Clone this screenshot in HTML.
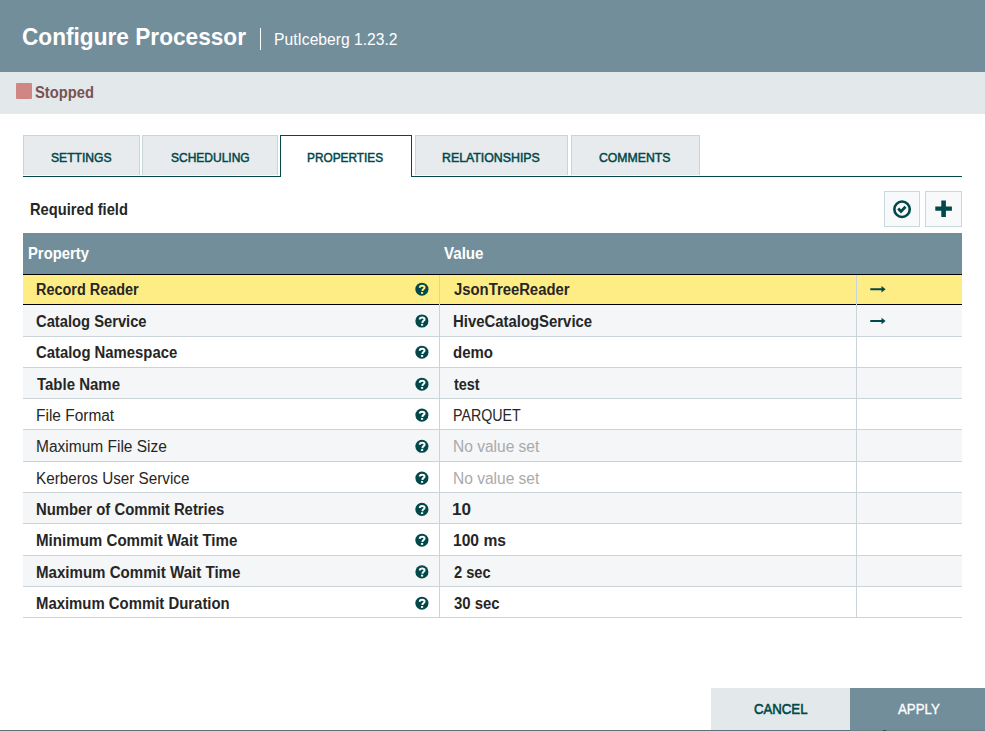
<!DOCTYPE html>
<html><head><meta charset="utf-8">
<style>
*{box-sizing:border-box;margin:0;padding:0}
html,body{width:985px;height:731px;overflow:hidden;background:#fff;font-family:"Liberation Sans",sans-serif;color:#262626}
.t{position:absolute;white-space:nowrap;transform-origin:0 0}
#hdr{position:absolute;left:0;top:0;width:985px;height:72px;background:#728e9b}
#sep{position:absolute;left:260px;top:28px;width:1px;height:22px;background:#fff}
#status{position:absolute;left:0;top:72px;width:985px;height:42px;background:#e3e8eb}
#sq{position:absolute;left:16px;top:83.4px;width:16px;height:15.4px;background:#d18686;border-radius:1px}
.tab{position:absolute;top:135px;height:40px;background:#e7ebee;border:1px solid #c6d7d9;border-bottom:none}
.tab.act{background:#fff;border-color:#004849;height:42px}
#tabline{position:absolute;left:23px;top:176px;width:939px;height:1px;background:#004849}
.btn{position:absolute;top:191px;width:36px;height:36px;border:1px solid #c9d8da;background:#f8f9fa}
#th{position:absolute;left:23px;top:233px;width:939px;height:41px;background:#728e9b}
#thl{position:absolute;left:23px;top:274px;width:939px;height:1px;background:#000}
.row{position:absolute;left:23px;width:939px}
.hl{position:absolute;left:23px;width:939px;height:1px}
.vl{position:absolute;width:1px;background:#cbd4d9}
.ic{position:absolute;display:block}
#cancel{position:absolute;left:711px;top:688px;width:139px;height:43px;background:#e3e8eb}
#apply{position:absolute;left:850px;top:688px;width:135px;height:43px;background:#728e9b}
#botline{position:absolute;left:0;top:730px;width:985px;height:1px;background:#626f77}
</style></head><body>
<div id="hdr"></div>
<div id="sep"></div>
<div id="status"></div>
<div id="sq"></div>
<div class="tab" style="left:23px;width:117px"></div>
<div class="tab" style="left:142px;width:136px"></div>
<div id="tabline"></div>
<div class="tab act" style="left:280px;width:132px"></div>
<div class="tab" style="left:415px;width:153px"></div>
<div class="tab" style="left:571px;width:129px"></div>
<div class="btn" style="left:884px"></div>
<div class="btn" style="left:925px;width:37px"></div>
<svg class="ic" style="left:884px;top:191px" width="80" height="36" viewBox="884 191 80 36">
<circle cx="902.05" cy="209.25" r="7.7" fill="none" stroke="#004849" stroke-width="2.6"/>
<path d="M898.2 208.5 L901.0 211.4 L905.5 206.8" fill="none" stroke="#004849" stroke-width="2.8"/>
<path d="M941.3 200.5 H945.9 V206.4 H951.9 V210.8 H945.9 V216.9 H941.3 V210.8 H935.3 V206.4 H941.3 Z" fill="#004849"/>
</svg>
<div id="th"></div>
<div id="thl"></div>
<div class="row" style="top:275px;height:29px;background:#feec84"></div>
<div class="hl" style="top:304px;background:#000"></div>
<svg class="ic" style="left:412px;top:279px;transform:translateY(0.00px)" width="20" height="20" viewBox="412 279 20 20"><circle cx="421.9" cy="289.2" r="6.55" fill="#004849"/><path d="M419.75 287.7 C419.75 286.3 420.8 285.75 422.1 285.75 C423.5 285.75 424.55 286.5 424.55 287.6 C424.55 288.9 422.55 289.1 422.55 290.3 V291.1" fill="none" stroke="#feec84" stroke-width="2.0"/><rect x="420.95" y="292.05" width="2.2" height="1.8" fill="#feec84"/></svg>
<svg class="ic" style="left:866px;top:280px;transform:translateY(0.10px)" width="24" height="18" viewBox="866 280 24 18"><path d="M870.3 288.1 H881.5 V285.8 L885.6 289.1 L881.5 292.4 V290.1 H870.3 Z" fill="#004849"/></svg>
<div class="row" style="top:305px;height:31px;background:#f4f6f7"></div>
<div class="hl" style="top:336px;background:#cbd4d9"></div>
<svg class="ic" style="left:412px;top:279px;transform:translateY(31.80px)" width="20" height="20" viewBox="412 279 20 20"><circle cx="421.9" cy="289.2" r="6.55" fill="#004849"/><path d="M419.75 287.7 C419.75 286.3 420.8 285.75 422.1 285.75 C423.5 285.75 424.55 286.5 424.55 287.6 C424.55 288.9 422.55 289.1 422.55 290.3 V291.1" fill="none" stroke="#f4f6f7" stroke-width="2.0"/><rect x="420.95" y="292.05" width="2.2" height="1.8" fill="#f4f6f7"/></svg>
<svg class="ic" style="left:866px;top:280px;transform:translateY(31.90px)" width="24" height="18" viewBox="866 280 24 18"><path d="M870.3 288.1 H881.5 V285.8 L885.6 289.1 L881.5 292.4 V290.1 H870.3 Z" fill="#004849"/></svg>
<div class="row" style="top:337px;height:30px;background:#ffffff"></div>
<div class="hl" style="top:367px;background:#cbd4d9"></div>
<svg class="ic" style="left:412px;top:279px;transform:translateY(63.00px)" width="20" height="20" viewBox="412 279 20 20"><circle cx="421.9" cy="289.2" r="6.55" fill="#004849"/><path d="M419.75 287.7 C419.75 286.3 420.8 285.75 422.1 285.75 C423.5 285.75 424.55 286.5 424.55 287.6 C424.55 288.9 422.55 289.1 422.55 290.3 V291.1" fill="none" stroke="#ffffff" stroke-width="2.0"/><rect x="420.95" y="292.05" width="2.2" height="1.8" fill="#ffffff"/></svg>
<div class="row" style="top:368px;height:30px;background:#f4f6f7"></div>
<div class="hl" style="top:398px;background:#cbd4d9"></div>
<svg class="ic" style="left:412px;top:279px;transform:translateY(95.00px)" width="20" height="20" viewBox="412 279 20 20"><circle cx="421.9" cy="289.2" r="6.55" fill="#004849"/><path d="M419.75 287.7 C419.75 286.3 420.8 285.75 422.1 285.75 C423.5 285.75 424.55 286.5 424.55 287.6 C424.55 288.9 422.55 289.1 422.55 290.3 V291.1" fill="none" stroke="#f4f6f7" stroke-width="2.0"/><rect x="420.95" y="292.05" width="2.2" height="1.8" fill="#f4f6f7"/></svg>
<div class="row" style="top:399px;height:30px;background:#ffffff"></div>
<div class="hl" style="top:429px;background:#cbd4d9"></div>
<svg class="ic" style="left:412px;top:279px;transform:translateY(125.90px)" width="20" height="20" viewBox="412 279 20 20"><circle cx="421.9" cy="289.2" r="6.55" fill="#004849"/><path d="M419.75 287.7 C419.75 286.3 420.8 285.75 422.1 285.75 C423.5 285.75 424.55 286.5 424.55 287.6 C424.55 288.9 422.55 289.1 422.55 290.3 V291.1" fill="none" stroke="#ffffff" stroke-width="2.0"/><rect x="420.95" y="292.05" width="2.2" height="1.8" fill="#ffffff"/></svg>
<div class="row" style="top:430px;height:31px;background:#f4f6f7"></div>
<div class="hl" style="top:461px;background:#cbd4d9"></div>
<svg class="ic" style="left:412px;top:279px;transform:translateY(157.10px)" width="20" height="20" viewBox="412 279 20 20"><circle cx="421.9" cy="289.2" r="6.55" fill="#004849"/><path d="M419.75 287.7 C419.75 286.3 420.8 285.75 422.1 285.75 C423.5 285.75 424.55 286.5 424.55 287.6 C424.55 288.9 422.55 289.1 422.55 290.3 V291.1" fill="none" stroke="#f4f6f7" stroke-width="2.0"/><rect x="420.95" y="292.05" width="2.2" height="1.8" fill="#f4f6f7"/></svg>
<div class="row" style="top:462px;height:30px;background:#ffffff"></div>
<div class="hl" style="top:492px;background:#cbd4d9"></div>
<svg class="ic" style="left:412px;top:279px;transform:translateY(188.90px)" width="20" height="20" viewBox="412 279 20 20"><circle cx="421.9" cy="289.2" r="6.55" fill="#004849"/><path d="M419.75 287.7 C419.75 286.3 420.8 285.75 422.1 285.75 C423.5 285.75 424.55 286.5 424.55 287.6 C424.55 288.9 422.55 289.1 422.55 290.3 V291.1" fill="none" stroke="#ffffff" stroke-width="2.0"/><rect x="420.95" y="292.05" width="2.2" height="1.8" fill="#ffffff"/></svg>
<div class="row" style="top:493px;height:30px;background:#f4f6f7"></div>
<div class="hl" style="top:523px;background:#cbd4d9"></div>
<svg class="ic" style="left:412px;top:279px;transform:translateY(220.20px)" width="20" height="20" viewBox="412 279 20 20"><circle cx="421.9" cy="289.2" r="6.55" fill="#004849"/><path d="M419.75 287.7 C419.75 286.3 420.8 285.75 422.1 285.75 C423.5 285.75 424.55 286.5 424.55 287.6 C424.55 288.9 422.55 289.1 422.55 290.3 V291.1" fill="none" stroke="#f4f6f7" stroke-width="2.0"/><rect x="420.95" y="292.05" width="2.2" height="1.8" fill="#f4f6f7"/></svg>
<div class="row" style="top:524px;height:31px;background:#ffffff"></div>
<div class="hl" style="top:555px;background:#cbd4d9"></div>
<svg class="ic" style="left:412px;top:279px;transform:translateY(251.00px)" width="20" height="20" viewBox="412 279 20 20"><circle cx="421.9" cy="289.2" r="6.55" fill="#004849"/><path d="M419.75 287.7 C419.75 286.3 420.8 285.75 422.1 285.75 C423.5 285.75 424.55 286.5 424.55 287.6 C424.55 288.9 422.55 289.1 422.55 290.3 V291.1" fill="none" stroke="#ffffff" stroke-width="2.0"/><rect x="420.95" y="292.05" width="2.2" height="1.8" fill="#ffffff"/></svg>
<div class="row" style="top:556px;height:30px;background:#f4f6f7"></div>
<div class="hl" style="top:586px;background:#cbd4d9"></div>
<svg class="ic" style="left:412px;top:279px;transform:translateY(282.70px)" width="20" height="20" viewBox="412 279 20 20"><circle cx="421.9" cy="289.2" r="6.55" fill="#004849"/><path d="M419.75 287.7 C419.75 286.3 420.8 285.75 422.1 285.75 C423.5 285.75 424.55 286.5 424.55 287.6 C424.55 288.9 422.55 289.1 422.55 290.3 V291.1" fill="none" stroke="#f4f6f7" stroke-width="2.0"/><rect x="420.95" y="292.05" width="2.2" height="1.8" fill="#f4f6f7"/></svg>
<div class="row" style="top:587px;height:30px;background:#ffffff"></div>
<div class="hl" style="top:617px;background:#cbd4d9"></div>
<svg class="ic" style="left:412px;top:279px;transform:translateY(314.00px)" width="20" height="20" viewBox="412 279 20 20"><circle cx="421.9" cy="289.2" r="6.55" fill="#004849"/><path d="M419.75 287.7 C419.75 286.3 420.8 285.75 422.1 285.75 C423.5 285.75 424.55 286.5 424.55 287.6 C424.55 288.9 422.55 289.1 422.55 290.3 V291.1" fill="none" stroke="#ffffff" stroke-width="2.0"/><rect x="420.95" y="292.05" width="2.2" height="1.8" fill="#ffffff"/></svg>
<div class="vl" style="left:439px;top:275px;height:342px"></div>
<div class="vl" style="left:856px;top:275px;height:342px"></div>
<div id="cancel"></div>
<div id="apply"></div>
<div id="botline"></div><div class="abs" style="position:absolute;left:850px;top:730px;width:135px;height:1px;background:#6f7d86"></div><div style="position:absolute;left:883px;top:730px;width:3px;height:1px;background:#2d4f55"></div>
<div class="t" style="left:22.36px;top:24.80px;font-family:'Liberation Sans',sans-serif;font-weight:bold;font-size:24px;line-height:24px;color:#fff;-webkit-text-stroke:0px #fff;transform:scaleX(0.9436)">Configure Processor</div>
<div class="t" style="left:273.68px;top:31.00px;font-family:'Liberation Sans',sans-serif;font-weight:normal;font-size:17px;line-height:17px;color:#fff;-webkit-text-stroke:0px #fff;transform:scaleX(0.9203)">PutIceberg 1.23.2</div>
<div class="t" style="left:35.18px;top:84.70px;font-family:'Liberation Sans',sans-serif;font-weight:bold;font-size:16px;line-height:16px;color:#775351;-webkit-text-stroke:0px #775351;transform:scaleX(0.9210)">Stopped</div>
<div class="t" style="left:50.80px;top:150.90px;font-family:'Liberation Sans',sans-serif;font-weight:normal;font-size:13px;line-height:13px;color:#004849;-webkit-text-stroke:0.5px #004849;transform:scaleX(0.9323)">SETTINGS</div>
<div class="t" style="left:170.70px;top:150.90px;font-family:'Liberation Sans',sans-serif;font-weight:normal;font-size:13px;line-height:13px;color:#004849;-webkit-text-stroke:0.5px #004849;transform:scaleX(0.9224)">SCHEDULING</div>
<div class="t" style="left:307.49px;top:150.90px;font-family:'Liberation Sans',sans-serif;font-weight:normal;font-size:13px;line-height:13px;color:#004849;-webkit-text-stroke:0.5px #004849;transform:scaleX(0.9108)">PROPERTIES</div>
<div class="t" style="left:442.25px;top:150.90px;font-family:'Liberation Sans',sans-serif;font-weight:normal;font-size:13px;line-height:13px;color:#004849;-webkit-text-stroke:0.5px #004849;transform:scaleX(0.9490)">RELATIONSHIPS</div>
<div class="t" style="left:599.40px;top:150.90px;font-family:'Liberation Sans',sans-serif;font-weight:normal;font-size:13px;line-height:13px;color:#004849;-webkit-text-stroke:0.5px #004849;transform:scaleX(0.9408)">COMMENTS</div>
<div class="t" style="left:30.21px;top:200.90px;font-family:'Liberation Sans',sans-serif;font-weight:bold;font-size:16.5px;line-height:16.5px;color:#262626;-webkit-text-stroke:0px #262626;transform:scaleX(0.8898)">Required field</div>
<div class="t" style="left:27.60px;top:245.10px;font-family:'Liberation Sans',sans-serif;font-weight:bold;font-size:16.5px;line-height:16.5px;color:#fff;-webkit-text-stroke:0px #fff;transform:scaleX(0.8970)">Property</div>
<div class="t" style="left:444.30px;top:245.10px;font-family:'Liberation Sans',sans-serif;font-weight:bold;font-size:16.5px;line-height:16.5px;color:#fff;-webkit-text-stroke:0px #fff;transform:scaleX(0.9163)">Value</div>
<div class="t" style="left:35.60px;top:281.90px;font-family:'Liberation Sans',sans-serif;font-weight:bold;font-size:16px;line-height:16px;color:#262626;-webkit-text-stroke:0px #262626;transform:scaleX(0.9018)">Record Reader</div>
<div class="t" style="left:453.50px;top:281.90px;font-family:'Liberation Sans',sans-serif;font-weight:bold;font-size:16px;line-height:16px;color:#262626;-webkit-text-stroke:0px #262626;transform:scaleX(0.9274)">JsonTreeReader</div>
<div class="t" style="left:35.58px;top:313.70px;font-family:'Liberation Sans',sans-serif;font-weight:bold;font-size:16px;line-height:16px;color:#262626;-webkit-text-stroke:0px #262626;transform:scaleX(0.9210)">Catalog Service</div>
<div class="t" style="left:452.57px;top:313.70px;font-family:'Liberation Sans',sans-serif;font-weight:bold;font-size:16px;line-height:16px;color:#262626;-webkit-text-stroke:0px #262626;transform:scaleX(0.9311)">HiveCatalogService</div>
<div class="t" style="left:35.57px;top:344.90px;font-family:'Liberation Sans',sans-serif;font-weight:bold;font-size:16px;line-height:16px;color:#262626;-webkit-text-stroke:0px #262626;transform:scaleX(0.9285)">Catalog Namespace</div>
<div class="t" style="left:452.56px;top:344.90px;font-family:'Liberation Sans',sans-serif;font-weight:bold;font-size:16px;line-height:16px;color:#262626;-webkit-text-stroke:0px #262626;transform:scaleX(0.9366)">demo</div>
<div class="t" style="left:36.50px;top:376.90px;font-family:'Liberation Sans',sans-serif;font-weight:bold;font-size:16px;line-height:16px;color:#262626;-webkit-text-stroke:0px #262626;transform:scaleX(0.9364)">Table Name</div>
<div class="t" style="left:453.50px;top:376.90px;font-family:'Liberation Sans',sans-serif;font-weight:bold;font-size:16px;line-height:16px;color:#262626;-webkit-text-stroke:0px #262626;transform:scaleX(0.9000)">test</div>
<div class="t" style="left:35.53px;top:407.80px;font-family:'Liberation Sans',sans-serif;font-weight:normal;font-size:16px;line-height:16px;color:#262626;-webkit-text-stroke:0px #262626;transform:scaleX(0.9662)">File Format</div>
<div class="t" style="left:452.61px;top:407.80px;font-family:'Liberation Sans',sans-serif;font-weight:normal;font-size:16px;line-height:16px;color:#262626;-webkit-text-stroke:0px #262626;transform:scaleX(0.8893)">PARQUET</div>
<div class="t" style="left:35.53px;top:439.00px;font-family:'Liberation Sans',sans-serif;font-weight:normal;font-size:16px;line-height:16px;color:#262626;-webkit-text-stroke:0px #262626;transform:scaleX(0.9687)">Maximum File Size</div>
<div class="t" style="left:452.53px;top:439.00px;font-family:'Liberation Sans',sans-serif;font-weight:normal;font-size:16px;line-height:16px;color:#aaaaaa;-webkit-text-stroke:0px #aaaaaa;transform:scaleX(0.9705)">No value set</div>
<div class="t" style="left:35.55px;top:470.80px;font-family:'Liberation Sans',sans-serif;font-weight:normal;font-size:16px;line-height:16px;color:#262626;-webkit-text-stroke:0px #262626;transform:scaleX(0.9535)">Kerberos User Service</div>
<div class="t" style="left:452.53px;top:470.80px;font-family:'Liberation Sans',sans-serif;font-weight:normal;font-size:16px;line-height:16px;color:#aaaaaa;-webkit-text-stroke:0px #aaaaaa;transform:scaleX(0.9705)">No value set</div>
<div class="t" style="left:35.57px;top:502.10px;font-family:'Liberation Sans',sans-serif;font-weight:bold;font-size:16px;line-height:16px;color:#262626;-webkit-text-stroke:0px #262626;transform:scaleX(0.9289)">Number of Commit Retries</div>
<div class="t" style="left:452.43px;top:502.10px;font-family:'Liberation Sans',sans-serif;font-weight:bold;font-size:16px;line-height:16px;color:#262626;-webkit-text-stroke:0px #262626;transform:scaleX(1.0688)">10</div>
<div class="t" style="left:35.56px;top:532.90px;font-family:'Liberation Sans',sans-serif;font-weight:bold;font-size:16px;line-height:16px;color:#262626;-webkit-text-stroke:0px #262626;transform:scaleX(0.9439)">Minimum Commit Wait Time</div>
<div class="t" style="left:452.52px;top:532.90px;font-family:'Liberation Sans',sans-serif;font-weight:bold;font-size:16px;line-height:16px;color:#262626;-webkit-text-stroke:0px #262626;transform:scaleX(0.9755)">100 ms</div>
<div class="t" style="left:35.56px;top:564.60px;font-family:'Liberation Sans',sans-serif;font-weight:bold;font-size:16px;line-height:16px;color:#262626;-webkit-text-stroke:0px #262626;transform:scaleX(0.9421)">Maximum Commit Wait Time</div>
<div class="t" style="left:453.50px;top:564.60px;font-family:'Liberation Sans',sans-serif;font-weight:bold;font-size:16px;line-height:16px;color:#262626;-webkit-text-stroke:0px #262626;transform:scaleX(0.9150)">2 sec</div>
<div class="t" style="left:35.57px;top:595.90px;font-family:'Liberation Sans',sans-serif;font-weight:bold;font-size:16px;line-height:16px;color:#262626;-webkit-text-stroke:0px #262626;transform:scaleX(0.9311)">Maximum Commit Duration</div>
<div class="t" style="left:453.50px;top:595.90px;font-family:'Liberation Sans',sans-serif;font-weight:bold;font-size:16px;line-height:16px;color:#262626;-webkit-text-stroke:0px #262626;transform:scaleX(0.9327)">30 sec</div>
<div class="t" style="left:753.80px;top:700.90px;font-family:'Liberation Sans',sans-serif;font-weight:normal;font-size:15.5px;line-height:15.5px;color:#004849;-webkit-text-stroke:0.6px #004849;transform:scaleX(0.8508)">CANCEL</div>
<div class="t" style="left:897.70px;top:700.90px;font-family:'Liberation Sans',sans-serif;font-weight:normal;font-size:15.5px;line-height:15.5px;color:#fff;-webkit-text-stroke:0.35px #fff;transform:scaleX(0.8571)">APPLY</div>
</body></html>
